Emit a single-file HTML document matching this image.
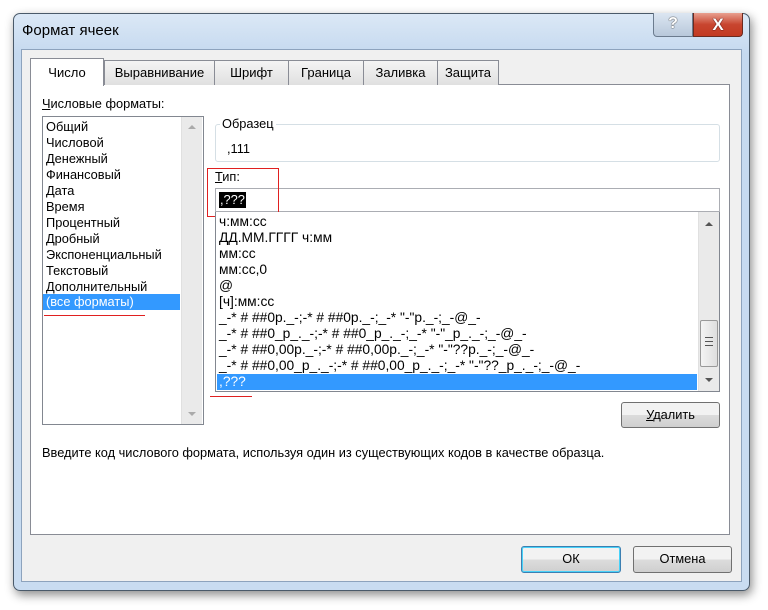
<!DOCTYPE html>
<html><head><meta charset="utf-8"><style>
*{box-sizing:border-box;margin:0;padding:0}
body{width:768px;height:610px;background:#fff;position:relative;overflow:hidden;font-family:"Liberation Sans","DejaVu Sans",sans-serif;font-size:12.8px;color:#000}
.a{position:absolute}
.win{left:13px;top:13px;width:737px;height:578px;border-radius:7px;border:1px solid #4a5a6a;background:linear-gradient(#dbe8f6,#c5d9ef 40px,#c9dcf1);box-shadow:2px 4px 10px rgba(0,0,0,.45)}
.client{left:21px;top:49px;width:721px;height:533px;background:#f0f0f0;border:1px solid #8da3bd}
.tab{top:60px;height:25px;background:linear-gradient(#f4f4f4,#e0e0e0);border:1px solid #898c95;border-bottom:none;text-align:center;line-height:24px;font-size:13px}
.panel{left:30px;top:84px;width:700px;height:451px;background:#fff;border:1px solid #898c95}
.list{background:#fff;border:1px solid #828790}
.sb{background:#eaeaea;border-left:1px solid #e0e0e0}
.row{position:absolute;left:3px;height:16px;line-height:16px;white-space:nowrap}
.f{font-size:13.8px}
.btn{border:1px solid #707070;border-radius:3px;background:linear-gradient(#f2f2f2 50%,#dcdcdc 50%,#cfcfcf);text-align:center;line-height:24px}
.up{width:0;height:0;border-left:4px solid transparent;border-right:4px solid transparent;border-bottom:4px solid #555}
.dn{width:0;height:0;border-left:4px solid transparent;border-right:4px solid transparent;border-top:4px solid #555}
</style></head><body>
<div class="a win"></div>
<div class="a" style="left:22px;top:22px;font-size:15px">Формат ячеек</div>
<div class="a" style="left:653px;top:13px;width:40px;height:24px;border:1px solid #6b7b8e;border-top:none;border-radius:0 0 0 4px;background:linear-gradient(#dce6f2,#b8c8db);text-align:center;font-size:16px;font-weight:bold;color:#fff;text-shadow:0 0 1px #333,0 0 1px #333;line-height:22px">?</div>
<div class="a" style="left:693px;top:13px;width:50px;height:24px;border:1px solid #6a2a20;border-top:none;border-radius:0 0 4px 0;background:linear-gradient(#e8a090,#c8452f 50%,#c23a22);text-align:center;font-size:17px;font-weight:bold;color:#fff;text-shadow:0 0 1px #400,0 0 1px #400;line-height:23px">X</div>
<div class="a client"></div>
<div class="a panel"></div>
<div class="a tab" style="left:104px;width:111px">Выравнивание</div>
<div class="a tab" style="left:214px;width:75px">Шрифт</div>
<div class="a tab" style="left:288px;width:76px">Граница</div>
<div class="a tab" style="left:363px;width:75px">Заливка</div>
<div class="a tab" style="left:437px;width:62px">Защита</div>
<div class="a tab" style="left:30px;top:58px;width:74px;height:28px;background:#fff;line-height:28px">Число</div>
<div class="a" style="left:42px;top:96px"><u>Ч</u>исловые форматы:</div>
<div class="a list" style="left:42px;top:116px;width:162px;height:309px">
<div class="a sb" style="left:138px;top:0;width:21px;height:307px"><div class="a up" style="left:6px;top:8px;border-bottom-color:#aaa"></div><div class="a dn" style="left:6px;top:295px;border-top-color:#aaa"></div></div>
<div class="row" style="top:2px">Общий</div>
<div class="row" style="top:18px">Числовой</div>
<div class="row" style="top:34px">Денежный</div>
<div class="row" style="top:50px">Финансовый</div>
<div class="row" style="top:66px">Дата</div>
<div class="row" style="top:82px">Время</div>
<div class="row" style="top:98px">Процентный</div>
<div class="row" style="top:114px">Дробный</div>
<div class="row" style="top:130px">Экспоненциальный</div>
<div class="row" style="top:146px">Текстовый</div>
<div class="row" style="top:162px">Дополнительный</div>
<div class="row" style="top:177px;left:0;width:137px;background:#3399ff;color:#fff;padding-left:3px">(все форматы)</div>
</div>
<div class="a" style="left:44px;top:315px;width:101px;height:1px;background:#e02020"></div>
<div class="a" style="left:215px;top:124px;width:505px;height:38px;border:1px solid #d5dfe5;border-radius:3px"></div>
<div class="a" style="left:220px;top:116px;background:#fff;padding:0 2px">Образец</div>
<div class="a" style="left:227px;top:141px">,111</div>
<div class="a" style="left:215px;top:169px"><u>Т</u>ип:</div>
<div class="a" style="left:215px;top:188px;width:505px;height:24px;border:1px solid #abadb3;background:#fff"><span class="a" style="left:3px;top:3px;background:#000;color:#fff;padding:0 1px;line-height:16px">,???</span></div>
<div class="a" style="left:207px;top:168px;width:72px;height:49px;border:1px solid #e02020"></div>
<div class="a list f" style="left:215px;top:212px;width:505px;height:180px;border-top:none">
<div class="a sb" style="left:482px;top:0;width:21px;height:179px"><div class="a up" style="left:6px;top:10px"></div><div class="a dn" style="left:6px;top:166px"></div>
<div class="a" style="left:1px;top:108px;width:18px;height:47px;border:1px solid #999;border-radius:2px;background:linear-gradient(90deg,#f4f4f4,#dedede)"><div class="a" style="left:4px;top:16px;width:8px;height:9px;border-top:1px solid #555;border-bottom:1px solid #555"></div><div class="a" style="left:4px;top:20px;width:8px;height:1px;background:#555"></div></div></div>
<div class="row" style="top:2px">ч:мм:сс</div>
<div class="row" style="top:18px">ДД.ММ.ГГГГ ч:мм</div>
<div class="row" style="top:34px">мм:сс</div>
<div class="row" style="top:50px">мм:сс,0</div>
<div class="row" style="top:66px">@</div>
<div class="row" style="top:82px">[ч]:мм:сс</div>
<div class="row" style="top:98px">_-* # ##0р._-;-* # ##0р._-;_-* "-"р._-;_-@_-</div>
<div class="row" style="top:114px">_-* # ##0_р_._-;-* # ##0_р_._-;_-* "-"_р_._-;_-@_-</div>
<div class="row" style="top:130px">_-* # ##0,00р._-;-* # ##0,00р._-;_-* "-"??р._-;_-@_-</div>
<div class="row" style="top:146px">_-* # ##0,00_р_._-;-* # ##0,00_р_._-;_-* "-"??_р_._-;_-@_-</div>
<div class="row" style="top:162px;left:1px;width:480px;background:#3399ff;color:#fff;padding-left:2px">,???</div>
</div>
<div class="a" style="left:210px;top:396px;width:42px;height:1px;background:#e02020"></div>
<div class="a btn" style="left:621px;top:402px;width:99px;height:26px"><u>У</u>далить</div>
<div class="a" style="left:42px;top:445px;font-size:12.8px">Введите код числового формата, используя один из существующих кодов в качестве образца.</div>
<div class="a btn" style="left:521px;top:546px;width:100px;height:27px;border-color:#3c7fb1;box-shadow:inset 0 0 0 1px #48d2f9">ОК</div>
<div class="a btn" style="left:633px;top:546px;width:99px;height:27px">Отмена</div>
</body></html>
